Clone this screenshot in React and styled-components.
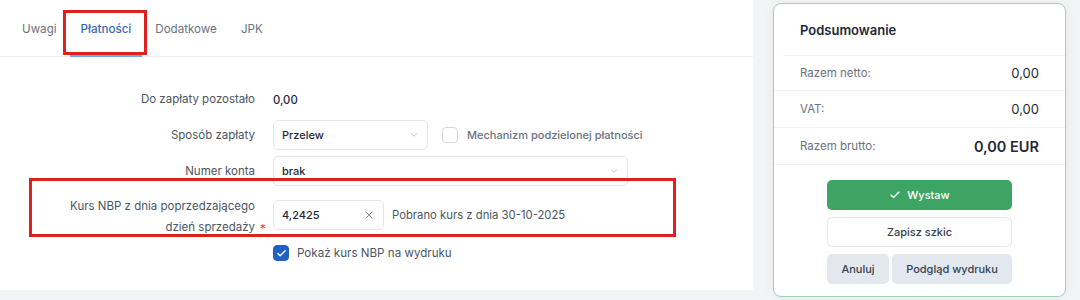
import React from "react";
import styled, { createGlobalStyle } from "styled-components";
import { ChevronDown, X, Check } from "lucide-react";

const Global = createGlobalStyle`
  html, body { margin: 0; padding: 0; }
  body {
    background: #f2f4f5;
    font-family: Inter, "Noto Sans", "Liberation Sans", sans-serif;
    color: #1f2937;
    -webkit-font-smoothing: antialiased;
  }
`;

const Page = styled.div`
  display: flex;
  align-items: flex-start;
  width: 1080px;
  height: 300px;
  overflow: hidden;
`;

const Panel = styled.div`
  position: relative;
  width: 753px;
  height: 290px;
  background: #ffffff;
  box-sizing: border-box;
`;

const Tabs = styled.div`
  display: flex;
  gap: 2px;
  height: 57px;
  padding: 2px 0 0 11px;
  border-bottom: 1px solid #eef0f2;
  box-sizing: border-box;
`;

const Tab = styled.div`
  position: relative;
  display: flex;
  align-items: center;
  padding: 0 11px;
  font-size: 11.6px;
  color: ${(p) => (p.$active ? "#3567c0" : "#6b7280")};
  font-weight: ${(p) => (p.$active ? 500 : 400)};
  &::after {
    content: "";
    position: absolute;
    left: 0;
    right: 0;
    bottom: -1px;
    height: 2px;
    background: ${(p) => (p.$active ? "#6aa9ee" : "transparent")};
  }
`;

const Form = styled.div`
  display: flex;
  flex-direction: column;
  padding-top: 32px;
`;

const Row = styled.div`
  display: grid;
  grid-template-columns: 255px 1fr;
  column-gap: 18px;
  align-items: ${(p) => p.$align || "center"};
  min-height: ${(p) => p.$h || 20}px;
  margin-top: ${(p) => p.$mt || 0}px;
`;

const Label = styled.div`
  text-align: right;
  font-size: 11.5px;
  line-height: 21px;
  color: #4b5563;
`;

const Line = styled.span`
  position: relative;
`;

const Req = styled.span`
  position: absolute;
  left: calc(100% + 5px);
  top: -1px;
  color: #e03a3a;
`;

const Value = styled.div`
  font-size: 11.3px;
  font-weight: 500;
  color: #1f2937;
`;

const Field = styled.div`
  display: flex;
  align-items: center;
  gap: ${(p) => p.$gap || 0}px;
  margin-top: ${(p) => p.$mt || 0}px;
`;

const Select = styled.div`
  display: flex;
  align-items: center;
  justify-content: space-between;
  width: ${(p) => p.$w}px;
  height: 30px;
  box-sizing: border-box;
  padding: 0 8px 0 8px;
  border: 1px solid #e3e6ea;
  border-radius: 5px;
  font-size: 11px;
  font-weight: 500;
  color: #1f2937;
  background: #fff;
  svg { color: #9ca3af; }
`;

const Input = styled(Select)`
  padding-right: 8px;
  svg { color: #6b7280; }
`;

const Box = styled.span`
  display: inline-flex;
  align-items: center;
  justify-content: center;
  width: 16px;
  height: 16px;
  box-sizing: border-box;
  border-radius: 4px;
  border: 1px solid ${(p) => (p.$checked ? "#2160c4" : "#d5d9de")};
  background: ${(p) => (p.$checked ? "#2160c4" : "#fff")};
  color: #fff;
  flex-shrink: 0;
`;

const CheckText = styled.span`
  font-size: ${(p) => (p.$muted ? 11 : 11.6)}px;
  color: ${(p) => (p.$muted ? "#6b7280" : "#4b5563")};
  font-weight: ${(p) => (p.$muted ? 500 : 400)};
  margin-left: ${(p) => (p.$muted ? -5 : 0)}px;
`;

const Note = styled.span`
  font-size: 11.3px;
  color: #4b5563;
`;

const Highlight = styled.div`
  position: absolute;
  left: ${(p) => p.$x}px;
  top: ${(p) => p.$y}px;
  width: ${(p) => p.$w}px;
  height: ${(p) => p.$h}px;
  border: 3px solid #e0201f;
  box-sizing: border-box;
  pointer-events: none;
`;

const Card = styled.div`
  width: 293px;
  height: 294px;
  margin: 3px 0 0 20px;
  box-sizing: border-box;
  background: #fff;
  border: 1px solid #9fd4b0;
  border-radius: 8px;
  box-shadow: 0 0 12px rgba(0, 0, 0, 0.06);
  display: flex;
  flex-direction: column;
`;

const CardTitle = styled.div`
  box-sizing: border-box;
  height: 52px;
  display: flex;
  align-items: center;
  font-size: 13px;
  font-weight: 600;
  color: #1f2937;
  border-bottom: 1px solid #f1f2f4;
  margin-left: 9px;
  padding-left: 17px;
`;

const SumRow = styled.div`
  box-sizing: border-box;
  display: flex;
  align-items: center;
  justify-content: space-between;
  height: ${(p) => p.$h || 36}px;
  padding: 0 26px;
  border-bottom: 1px solid #f1f2f4;
`;

const SumLabel = styled.span`
  font-size: 11.5px;
  color: #6b7280;
`;

const SumValue = styled.span`
  font-size: ${(p) => (p.$big ? 14.5 : 13)}px;
  font-weight: ${(p) => (p.$big ? 600 : 400)};
  color: #1f2937;
`;

const Actions = styled.div`
  display: flex;
  flex-direction: column;
  align-items: center;
  gap: 7px;
  padding-top: 15px;
`;

const BtnRow = styled.div`
  display: flex;
  gap: 3px;
  width: 185px;
`;

const Button = styled.button`
  display: flex;
  align-items: center;
  justify-content: center;
  gap: 6px;
  width: ${(p) => (p.$w ? `${p.$w}px` : "185px")};
  flex: ${(p) => (p.$grow ? 1 : "none")};
  height: 30px;
  padding: 0;
  border-radius: 5px;
  font-family: inherit;
  font-size: 11px;
  font-weight: 500;
  cursor: pointer;
  box-sizing: border-box;
  ${(p) =>
    p.$variant === "primary"
      ? `background:#3ea463;color:#fff;border:none;`
      : p.$variant === "muted"
      ? `background:#e3e8ee;color:#374151;border:none;`
      : `background:#fff;color:#374151;border:1px solid #e6e8eb;`}
`;

export default function App() {
  return (
    <>
      <Global />
      <Page>
        <Panel>
          <Tabs>
            <Tab>Uwagi</Tab>
            <Tab $active>Płatności</Tab>
            <Tab>Dodatkowe</Tab>
            <Tab>JPK</Tab>
          </Tabs>
          <Form>
            <Row $h={20}>
              <Label>Do zapłaty pozostało</Label>
              <Value>0,00</Value>
            </Row>
            <Row $h={30} $mt={10}>
              <Label>Sposób zapłaty</Label>
              <Field $gap={14}>
                <Select $w={155}>
                  Przelew
                  <ChevronDown size={10} strokeWidth={1.5} />
                </Select>
                <Box />
                <CheckText $muted>Mechanizm podzielonej płatności</CheckText>
              </Field>
            </Row>
            <Row $h={30} $mt={6}>
              <Label>Numer konta</Label>
              <Field>
                <Select $w={355}>
                  brak
                  <ChevronDown size={10} strokeWidth={1.5} />
                </Select>
              </Field>
            </Row>
            <Row $h={42} $mt={10} $align="start">
              <Label>
                Kurs NBP z dnia poprzedzającego
                <br />
                <Line>
                  dzień sprzedaży<Req>*</Req>
                </Line>
              </Label>
              <Field $gap={8} $mt={4}>
                <Input $w={111}>
                  4,2425
                  <X size={12} strokeWidth={1.5} />
                </Input>
                <Note>Pobrano kurs z dnia 30-10-2025</Note>
              </Field>
            </Row>
            <Row $h={20} $mt={5}>
              <div />
              <Field $gap={8}>
                <Box $checked>
                  <Check size={11} strokeWidth={3} />
                </Box>
                <CheckText>Pokaż kurs NBP na wydruku</CheckText>
              </Field>
            </Row>
          </Form>
          <Highlight $x={63} $y={10} $w={84} $h={45} />
          <Highlight $x={29} $y={178} $w={647} $h={59} />
        </Panel>
        <Card>
          <CardTitle>Podsumowanie</CardTitle>
          <SumRow $h={35}>
            <SumLabel>Razem netto:</SumLabel>
            <SumValue>0,00</SumValue>
          </SumRow>
          <SumRow $h={37}>
            <SumLabel>VAT:</SumLabel>
            <SumValue>0,00</SumValue>
          </SumRow>
          <SumRow $h={37}>
            <SumLabel>Razem brutto:</SumLabel>
            <SumValue $big>0,00 EUR</SumValue>
          </SumRow>
          <Actions>
            <Button $variant="primary">
              <Check size={12} strokeWidth={2.5} />
              Wystaw
            </Button>
            <Button>Zapisz szkic</Button>
            <BtnRow>
              <Button $variant="muted" $w={62}>Anuluj</Button>
              <Button $variant="muted" $grow>Podgląd wydruku</Button>
            </BtnRow>
          </Actions>
        </Card>
      </Page>
    </>
  );
}
